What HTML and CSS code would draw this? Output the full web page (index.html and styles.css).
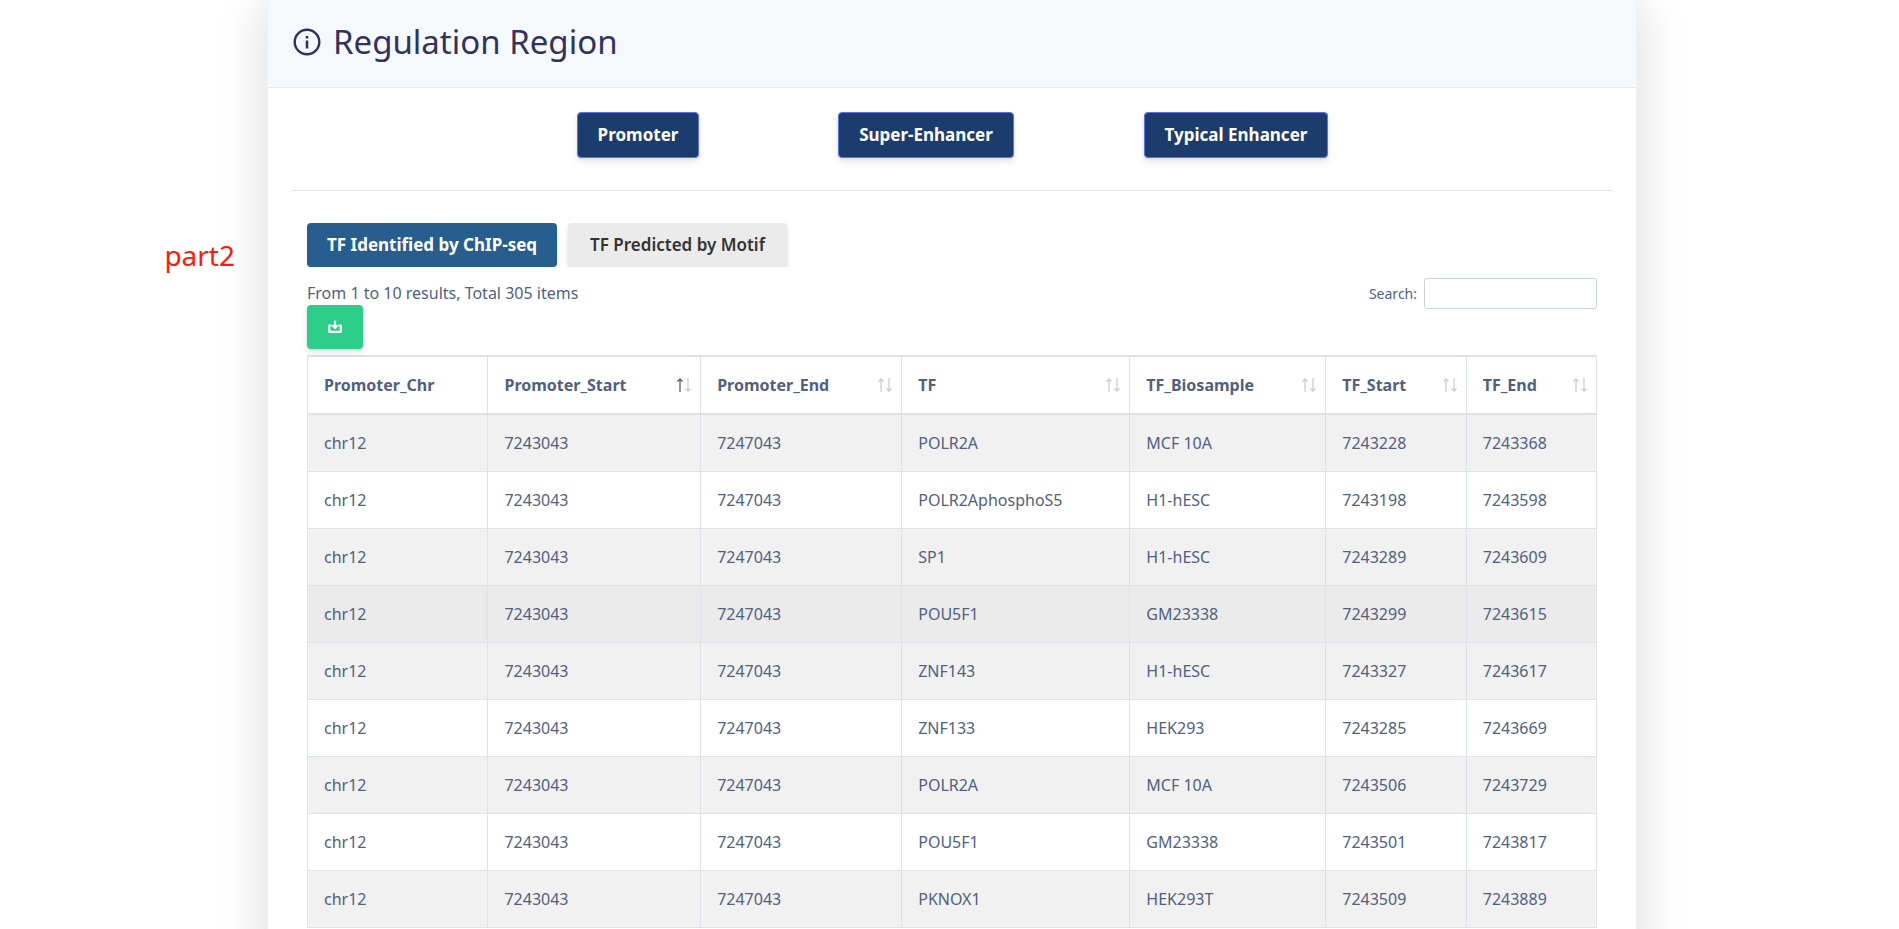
FILE: index.html
```html
<!DOCTYPE html>
<html lang="en">
<head>
<meta charset="utf-8">
<title>Regulation Region</title>
<link rel="stylesheet" href="styles.css">
</head>
<body>
<svg class="sprite" aria-hidden="true">
  <symbol id="arrow-up" viewBox="0 0 6 14"><path d="M3 14V1M0.5 3.5L3 1l2.500 2.500" fill="none" stroke="currentColor" stroke-width="1.300"/></symbol>
  <symbol id="arrow-down" viewBox="0 0 6 14"><path d="M3 0v13M0.500 10.500L3 13l2.500-2.500" fill="none" stroke="currentColor" stroke-width="1.300"/></symbol>
</svg>
<div class="page">
  <aside class="note">part2</aside>
  <main class="card">
    <header class="card-header">
      <svg class="info-icon" viewBox="0 0 28 28" aria-hidden="true"><circle cx="14" cy="14" r="12.300" fill="none" stroke="currentColor" stroke-width="2.400"/><path d="M12.700 12.500h2.600v8h-2.600zM12.700 8h2.600v2.600h-2.600z" fill="currentColor"/></svg>
      <h1 class="title">Regulation Region</h1>
    </header>
    <div class="card-body">
      <div class="regions">
        <button class="btn btn-region" type="button">Promoter</button>
        <button class="btn btn-region" type="button">Super-Enhancer</button>
        <button class="btn btn-region" type="button">Typical Enhancer</button>
      </div>
      <section class="results">
        <div class="tabs">
          <button class="btn tab tab-active" type="button">TF Identified by ChIP-seq</button>
          <button class="btn tab" type="button">TF Predicted by Motif</button>
        </div>
        <div class="toolbar">
          <div class="summary">
            <span>From 1 to 10 results, Total 305 items</span>
            <button class="btn download" type="button" aria-label="Download"><svg class="download-icon" viewBox="0 0 14 14" aria-hidden="true"><path d="M3.500 5.500H1.200v6.300h11.600V5.500h-2.300" fill="none" stroke="currentColor" stroke-width="2.200" stroke-linejoin="round"/><path d="M5.900 0.800h2.200v4.200h3L7 9.500 2.900 5h3z" fill="currentColor"/></svg></button>
          </div>
          <div class="search">
            <label for="search">Search:</label>
            <input id="search" class="search-input" type="search">
          </div>
        </div>
        <table class="grid">
          <colgroup><col class="c-chr"><col class="c-start"><col class="c-end"><col class="c-tf"><col class="c-bio"><col class="c-tfstart"><col class="c-tfend"></colgroup>
          <thead>
            <tr>
              <th scope="col"><div class="head">Promoter_Chr</div></th>
              <th scope="col" aria-sort="ascending"><div class="head">Promoter_Start<span class="sort"><svg class="on"><use href="#arrow-up"/></svg><svg><use href="#arrow-down"/></svg></span></div></th>
              <th scope="col"><div class="head">Promoter_End<span class="sort"><svg><use href="#arrow-up"/></svg><svg><use href="#arrow-down"/></svg></span></div></th>
              <th scope="col"><div class="head">TF<span class="sort"><svg><use href="#arrow-up"/></svg><svg><use href="#arrow-down"/></svg></span></div></th>
              <th scope="col"><div class="head">TF_Biosample<span class="sort"><svg><use href="#arrow-up"/></svg><svg><use href="#arrow-down"/></svg></span></div></th>
              <th scope="col"><div class="head">TF_Start<span class="sort"><svg><use href="#arrow-up"/></svg><svg><use href="#arrow-down"/></svg></span></div></th>
              <th scope="col"><div class="head">TF_End<span class="sort"><svg><use href="#arrow-up"/></svg><svg><use href="#arrow-down"/></svg></span></div></th>
            </tr>
          </thead>
          <tbody>
            <tr><td>chr12</td><td>7243043</td><td>7247043</td><td>POLR2A</td><td>MCF 10A</td><td>7243228</td><td>7243368</td></tr>
            <tr><td>chr12</td><td>7243043</td><td>7247043</td><td>POLR2AphosphoS5</td><td>H1-hESC</td><td>7243198</td><td>7243598</td></tr>
            <tr><td>chr12</td><td>7243043</td><td>7247043</td><td>SP1</td><td>H1-hESC</td><td>7243289</td><td>7243609</td></tr>
            <tr class="hovered"><td>chr12</td><td>7243043</td><td>7247043</td><td>POU5F1</td><td>GM23338</td><td>7243299</td><td>7243615</td></tr>
            <tr><td>chr12</td><td>7243043</td><td>7247043</td><td>ZNF143</td><td>H1-hESC</td><td>7243327</td><td>7243617</td></tr>
            <tr><td>chr12</td><td>7243043</td><td>7247043</td><td>ZNF133</td><td>HEK293</td><td>7243285</td><td>7243669</td></tr>
            <tr><td>chr12</td><td>7243043</td><td>7247043</td><td>POLR2A</td><td>MCF 10A</td><td>7243506</td><td>7243729</td></tr>
            <tr><td>chr12</td><td>7243043</td><td>7247043</td><td>POU5F1</td><td>GM23338</td><td>7243501</td><td>7243817</td></tr>
            <tr><td>chr12</td><td>7243043</td><td>7247043</td><td>PKNOX1</td><td>HEK293T</td><td>7243509</td><td>7243889</td></tr>
          </tbody>
        </table>
      </section>
    </div>
  </main>
</div>
</body>
</html>
```

FILE: styles.css
```css
* { box-sizing: border-box; }

body {
  margin: 0;
  height: 100vh;
  overflow: hidden;
  background: #fff;
  color: #525f7f;
  font: 16px/24px "Noto Sans", "Open Sans", sans-serif;
}

.sprite { display: none; }

.page {
  display: grid;
  grid-template-columns: 267fr 1370fr 262fr;
}

.note {
  padding: 235px 32px 0 0;
  color: #ff1a0a;
  font-size: 28px;
  line-height: 40px;
  text-align: right;
}

.card {
  padding-bottom: 48px;
  background: #fff;
  border: solid rgba(0, 0, 0, 0.05);
  border-width: 0 1px;
  box-shadow: 0 0 48px rgba(0, 0, 0, 0.15);
}

.card-header {
  display: flex;
  align-items: center;
  gap: 12px;
  padding: 18px 25px 22px;
  border-bottom: 1px solid #e6e9ed;
  background: #f5f9fc;
  color: #32325d;
}

.info-icon {
  width: 28px;
  height: 28px;
}

.title {
  margin: 0;
  font-size: 33px;
  font-weight: 400;
  line-height: 47px;
}

.card-body { padding: 24px 24px 0; }

.regions {
  display: grid;
  grid-template-columns: 288px 288px 332px;
  justify-content: center;
  justify-items: center;
  padding: 0 8px 32px 0;
  border-bottom: 1px solid #e5e5e5;
}

.btn {
  padding: 10px 20px;
  border: 0;
  border-radius: 4px;
  color: #fff;
  font-family: inherit;
  font-size: 17px;
  font-weight: 700;
  line-height: 24px;
  white-space: nowrap;
  box-shadow: 0 4px 6px rgba(50, 50, 93, 0.11), 0 1px 3px rgba(0, 0, 0, 0.08);
}

.btn-region {
  border: 1px solid #5e72e4;
  background: #1d3c6e;
}

.results { padding: 32px 15px 0; }

.tabs {
  display: flex;
  gap: 11px;
  overflow: hidden;
}

.tab {
  padding: 10px 22px;
  background: #ebebeb;
  color: #333;
  font-weight: 600;
}

.tab-active {
  padding: 10px 20px;
  background: #285e8e;
  color: #fff;
  font-weight: 700;
}

.toolbar {
  display: flex;
  align-items: flex-start;
  justify-content: space-between;
  padding: 11px 0 6px;
}

.summary {
  display: flex;
  flex-direction: column;
  align-items: flex-start;
  padding-top: 3px;
}

.download {
  display: flex;
  width: 56px;
  height: 44px;
  align-items: center;
  justify-content: center;
  background: #2dce89;
}

.download-icon {
  width: 14px;
  height: 14px;
}

.search {
  display: flex;
  align-items: center;
  gap: 7px;
  font-size: 14px;
}

.search-input {
  width: 173px;
  height: 31px;
  padding: 4px 8px;
  border: 1px solid #cad1d7;
  border-radius: 3px;
  background: #fff;
  font: inherit;
}

.grid {
  width: 100%;
  table-layout: fixed;
  border: solid #dee2e6;
  border-width: 1px 0 0 1px;
  border-collapse: separate;
  border-spacing: 0;
}

.c-chr { width: 14%; }
.c-start { width: 16.5%; }
.c-end { width: 15.6%; }
.c-tf { width: 17.7%; }
.c-bio { width: 15.2%; }
.c-tfstart { width: 10.9%; }
.c-tfend { width: 10.1%; }

.grid th,
.grid td {
  padding: 16px;
  border: solid #dee2e6;
  border-width: 0 1px 1px 0;
  text-align: left;
}

.grid th {
  padding-right: 9px;
  border-width: 1px 1px 2px 0;
  font-weight: 700;
}

.grid tbody tr:nth-child(odd) { background: #f1f1f1; }
.grid tbody tr.hovered { background: #ebebeb; }

.head {
  display: flex;
  align-items: center;
  justify-content: space-between;
}

.sort {
  display: flex;
  gap: 2px;
}

.sort svg {
  width: 6px;
  height: 14px;
  opacity: 0.3;
}

.sort .on { opacity: 1; }
```
